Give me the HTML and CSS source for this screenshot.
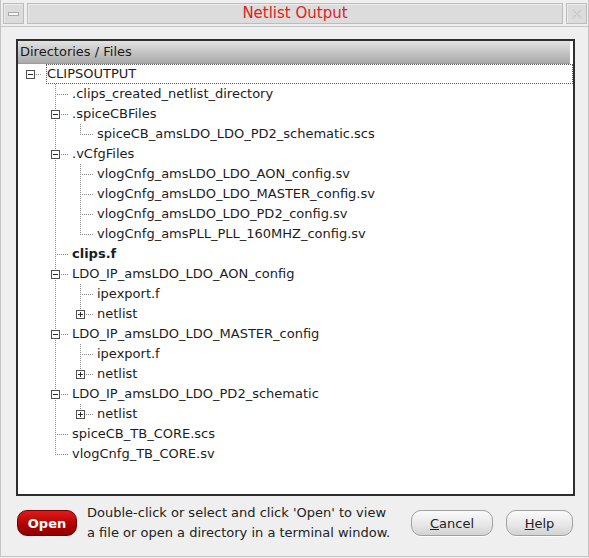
FILE: index.html
```html
<!DOCTYPE html>
<html>
<head>
<meta charset="utf-8">
<link rel="stylesheet" href="styles.css">
</head>
<body>
<div class="window">
  <div class="titlebar">
    <div class="tbtn menu"><span class="dash"></span></div>
    <div class="title">Netlist Output</div>
    <div class="tbtn close">
      <svg width="12" height="12" viewBox="0 0 12 12"><path d="M2 2 L10 10 M10 2 L2 10" stroke="#c8c8c8" stroke-width="2" stroke-dasharray="1.5 1" fill="none"/></svg>
    </div>
  </div>
  <div class="frame">
    <div class="header">Directories / Files</div>
    <div class="tree">
      <div class="row"><span class="g root"><span class="box minus"></span></span><span class="label sel">CLIPSOUTPUT</span></div>
      <div class="row"><span class="g"></span><span class="g tee"></span><span class="label">.clips_created_netlist_directory</span></div>
      <div class="row"><span class="g"></span><span class="g tee"><span class="box minus"></span></span><span class="label">.spiceCBFiles</span></div>
      <div class="row"><span class="g"></span><span class="g v"></span><span class="g end"></span><span class="label">spiceCB_amsLDO_LDO_PD2_schematic.scs</span></div>
      <div class="row"><span class="g"></span><span class="g tee"><span class="box minus"></span></span><span class="label">.vCfgFiles</span></div>
      <div class="row"><span class="g"></span><span class="g v"></span><span class="g tee"></span><span class="label">vlogCnfg_amsLDO_LDO_AON_config.sv</span></div>
      <div class="row"><span class="g"></span><span class="g v"></span><span class="g tee"></span><span class="label">vlogCnfg_amsLDO_LDO_MASTER_config.sv</span></div>
      <div class="row"><span class="g"></span><span class="g v"></span><span class="g tee"></span><span class="label">vlogCnfg_amsLDO_LDO_PD2_config.sv</span></div>
      <div class="row"><span class="g"></span><span class="g v"></span><span class="g end"></span><span class="label">vlogCnfg_amsPLL_PLL_160MHZ_config.sv</span></div>
      <div class="row"><span class="g"></span><span class="g tee"></span><span class="label bold">clips.f</span></div>
      <div class="row"><span class="g"></span><span class="g tee"><span class="box minus"></span></span><span class="label">LDO_IP_amsLDO_LDO_AON_config</span></div>
      <div class="row"><span class="g"></span><span class="g v"></span><span class="g tee"></span><span class="label">ipexport.f</span></div>
      <div class="row"><span class="g"></span><span class="g v"></span><span class="g end"><span class="box plus"></span></span><span class="label">netlist</span></div>
      <div class="row"><span class="g"></span><span class="g tee"><span class="box minus"></span></span><span class="label">LDO_IP_amsLDO_LDO_MASTER_config</span></div>
      <div class="row"><span class="g"></span><span class="g v"></span><span class="g tee"></span><span class="label">ipexport.f</span></div>
      <div class="row"><span class="g"></span><span class="g v"></span><span class="g end"><span class="box plus"></span></span><span class="label">netlist</span></div>
      <div class="row"><span class="g"></span><span class="g tee"><span class="box minus"></span></span><span class="label">LDO_IP_amsLDO_LDO_PD2_schematic</span></div>
      <div class="row"><span class="g"></span><span class="g v"></span><span class="g end"><span class="box plus"></span></span><span class="label">netlist</span></div>
      <div class="row"><span class="g"></span><span class="g tee"></span><span class="label">spiceCB_TB_CORE.scs</span></div>
      <div class="row"><span class="g"></span><span class="g end"></span><span class="label">vlogCnfg_TB_CORE.sv</span></div>
    </div>
  </div>
  <div class="bottom">
    <button class="btn open">Open</button>
    <div class="hint">Double-click or select and click 'Open' to view<br>a file or open a directory in a terminal window.</div>
    <button class="btn gray cancel"><u>C</u>ancel</button>
    <button class="btn gray help"><u>H</u>elp</button>
  </div>
</div>
</body>
</html>
```

FILE: styles.css
```css
html, body {
  margin: 0;
  padding: 0;
}
body {
  width: 589px;
  height: 558px;
  background: #efefef;
  font-family: "DejaVu Sans", sans-serif;
  font-size: 13px;
  color: #1c1c1c;
  overflow: hidden;
}
.window {
  width: 587px;
  height: 556px;
  border: 1px solid #c4c4c4;
  border-top: none;
  display: flex;
  flex-direction: column;
}
.titlebar {
  display: flex;
  gap: 3px;
  padding: 3px 1px 0 2px;
  height: 21px;
  border-bottom: 1px solid #c6c6c6;
  padding-bottom: 2px;
}
.tbtn, .title {
  background: #dcdcdc;
  border: 1px solid #bcbcbc;
  box-shadow: inset 1px 1px 0 #ececec;
  box-sizing: border-box;
  height: 21px;
}
.tbtn {
  width: 21px;
  display: flex;
  align-items: center;
  justify-content: center;
}
.menu .dash {
  width: 11px;
  height: 4px;
  background: #f6f6f6;
  border: 1px solid #a8a8a8;
  box-sizing: border-box;
}
.title {
  flex: 1;
  text-align: center;
  color: #de2222;
  font-size: 15px;
  line-height: 19px;
}
.frame {
  margin: 12px 13px 0 15px;
  height: 457px;
  border: 2px solid #2e2e2e;
  box-sizing: border-box;
  background: #fff;
  display: flex;
  flex-direction: column;
}
.header {
  height: 23px;
  margin-right: 3px;
  box-sizing: border-box;
  padding: 3px 0 0 2px;
  background: linear-gradient(#e2e2e2, #a9a9a9);
  border-bottom: 1px solid #9c9c9c;
  color: #1a1a1a;
}
.tree {
  display: flex;
  flex-direction: column;
}
.row {
  display: flex;
  height: 20px;
  align-items: stretch;
}
.g {
  width: 25px;
  flex: none;
  display: flex;
  align-items: center;
  padding-left: 8px;
  box-sizing: border-box;
  background-repeat: no-repeat;
}
.g.v {
  background-image: repeating-linear-gradient(to bottom, #8a8a8a 0 1px, transparent 1px 2px);
  background-size: 1px 100%;
  background-position: 12px 0;
}
.g.tee {
  background-image:
    repeating-linear-gradient(to bottom, #8a8a8a 0 1px, transparent 1px 2px),
    repeating-linear-gradient(to right, #8a8a8a 0 1px, transparent 1px 2px);
  background-size: 1px 100%, 13px 1px;
  background-position: 12px 0, 12px 10px;
}
.g.end {
  background-image:
    repeating-linear-gradient(to bottom, #8a8a8a 0 1px, transparent 1px 2px),
    repeating-linear-gradient(to right, #8a8a8a 0 1px, transparent 1px 2px);
  background-size: 1px 11px, 13px 1px;
  background-position: 12px 0, 12px 10px;
}
.g.root {
  background-image: repeating-linear-gradient(to right, #8a8a8a 0 1px, transparent 1px 2px);
  background-size: 8px 1px;
  background-position: 16px 10px;
}
.box {
  width: 9px;
  height: 9px;
  box-sizing: border-box;
  border: 1px solid #4f4f4f;
  background-color: #fff;
  background-repeat: no-repeat;
  background-position: center;
}
.box.minus {
  background-image: linear-gradient(#2a2a2a, #2a2a2a);
  background-size: 5px 1px;
}
.box.plus {
  background-image: linear-gradient(#2a2a2a, #2a2a2a), linear-gradient(#2a2a2a, #2a2a2a);
  background-size: 5px 1px, 1px 5px;
}
.label {
  margin-left: 3px;
  border: 1px dotted transparent;
  padding-left: 0;
  line-height: 18px;
  white-space: nowrap;
}
.label.sel {
  flex: 1;
  border-color: #5a5a5a;
}
.label.bold {
  font-weight: bold;
}
.bottom {
  display: flex;
  align-items: flex-start;
  margin-top: 7px;
  padding: 0 15px 0 16px;
}
.btn {
  font-family: "DejaVu Sans", sans-serif;
  font-size: 13px;
  height: 26px;
  margin-top: 7px;
  border-radius: 10px;
  padding: 0;
  box-sizing: border-box;
}
.btn.open {
  width: 60px;
  color: #fff;
  font-weight: bold;
  background: linear-gradient(#e01a1a, #b00000 60%, #900000);
  border: 1px solid #700000;
}
.hint {
  margin-left: 10px;
  line-height: 20px;
  color: #222;
  white-space: nowrap;
}
.btn.gray {
  color: #222;
  background: linear-gradient(#fbfbfb, #e6e6e6 60%, #d2d2d2);
  border: 1px solid #a0a0a0;
  box-shadow: 0 1px 0 #fff;
}
.cancel {
  width: 82px;
  margin-left: auto;
}
.help {
  width: 67px;
  margin-left: 13px;
}
```
